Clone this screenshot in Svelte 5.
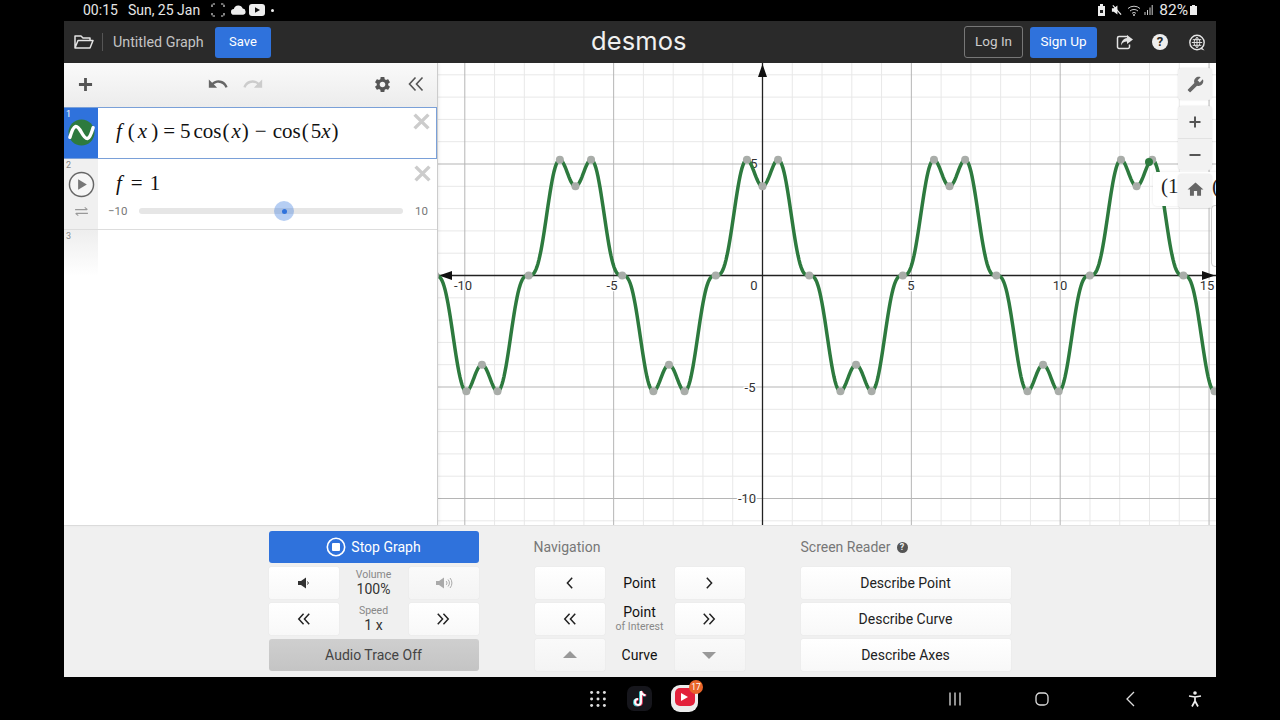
<script>
  const OX = 324.5, OY = 212.5, SX = 29.77, SY = 22.3, W = 778, H = 462;
  const px = (x) => OX + SX * x;
  const py = (y) => OY - SY * y;
  const f = (x) => 5 * Math.cos(x) - Math.cos(5 * x);
  let d = '';
  for (let s = 0; s <= W; s += 1) {
    const x = (s - OX) / SX;
    d += (s ? 'L' : 'M') + s + ' ' + py(f(x)).toFixed(2);
  }
  const vMinor = [], vMajor = [], hMinor = [], hMajor = [];
  for (let i = -10; i <= 15; i++) {
    if (i === 0) continue;
    (i % 5 === 0 ? vMajor : vMinor).push(px(i));
  }
  vMinor.push(px(-11));
  for (let i = -11; i <= 10; i++) {
    if (i === 0) continue;
    (i % 5 === 0 ? hMajor : hMinor).push(py(i));
  }
  const pts = [];
  for (let k = -20; k <= 20; k++) {
    const a = (k * Math.PI) / 2;
    if (a > -11 && a < 15.3) pts.push([px(a), py(f(a))]);
    const b = Math.PI / 6 + (k * Math.PI) / 3;
    if (b > -11 && b < 15.3 && Math.abs(Math.abs(f(b)) - 5.196) < 0.01) pts.push([px(b), py(f(b))]);
  }
  const xLabels = [['-10', 25, 227], ['-5', 174, 227], ['0', 316, 227], ['5', 473, 227], ['10', 622, 227], ['15', 769, 227]];
  const yLabels = [['5', 316, 105], ['-5', 312, 329], ['-10', 309, 440]];
</script>

<div class="screen">
  <div class="status">
    <div class="st-left">
      <span class="time">00:15</span>
      <span class="date">Sun, 25 Jan</span>
      <svg class="st-ic brackets" viewBox="0 0 14 14"><path d="M1 4V1h3M10 1h3v3M13 10v3h-3M4 13H1v-3" fill="none" stroke="#ddd" stroke-width="1.2" stroke-dasharray="2.4 1.4"/></svg>
      <svg class="st-ic cloud" viewBox="0 0 16 10"><path d="M3 10a3 3 0 0 1 0-6 5 5 0 0 1 9.500-.5A3.300 3.300 0 0 1 13 10z" fill="#eee"/></svg>
      <svg class="st-ic yt" viewBox="0 0 16 12"><rect width="16" height="12" rx="3" fill="#eee"/><path d="M6 3.300l5 2.700-5 2.700z" fill="#111"/></svg>
      <span class="dot"></span>
    </div>
    <div class="st-right">
      <svg class="st-ic bat0" viewBox="0 0 9 12"><path d="M1 2h2V0h3v2h2v10H1z" fill="#eee"/><path d="M3 6h3v3H3z" fill="#222"/></svg>
      <svg class="st-ic mute" viewBox="0 0 12 12"><path d="M1 4h2l4-3v10L3 8H1z" fill="#eee"/><path d="M2 1l9 10" stroke="#eee" stroke-width="1.300"/></svg>
      <svg class="st-ic wifi" viewBox="0 0 15 12"><path d="M1 4.500a9 9 0 0 1 12 0M3 7a6 6 0 0 1 8 0M5 9.300a3 3 0 0 1 4 0" fill="none" stroke="#ccc" stroke-width="1"/><circle cx="7" cy="11" r="1" fill="#ccc"/></svg>
      <svg class="st-ic sig" viewBox="0 0 9 12"><path d="M1 8v3M3.500 6v5M6 3.500V11M8.200 1v10" stroke="#ccc" stroke-width="1"/></svg>
      <span class="pct">82%</span>
      <svg class="st-ic bat" viewBox="0 0 7 10"><path d="M2 0h3v1h2v9H0V1h2z" fill="#eee"/></svg>
    </div>
  </div>

  <div class="app">
    <header class="top">
      <svg class="folder" viewBox="0 0 20 16"><path d="M1 14V2h6l2 2h7v2.500M1 14l3-7.500h15L16 14z" fill="none" stroke="#e4e4e4" stroke-width="1.500" stroke-linejoin="round"/></svg>
      <span class="sep"></span>
      <span class="title">Untitled Graph</span>
      <button class="blue save">Save</button>
      <span class="logo">desmos</span>
      <div class="top-right">
        <button class="login">Log In</button>
        <button class="blue signup">Sign Up</button>
        <svg class="hic share" viewBox="0 0 18 16"><path d="M12 2H3a1.500 1.500 0 0 0-1.500 1.500v9A1.500 1.500 0 0 0 3 14h9a1.500 1.500 0 0 0 1.500-1.500V10" fill="none" stroke="#e4e4e4" stroke-width="1.500"/><path d="M11 0.500l6 4.500-6 4.500V7C8 7 6 8.500 5 11c0-4 2.500-7 6-7.500z" fill="#e4e4e4"/></svg>
        <span class="help">?</span>
        <svg class="hic globe" viewBox="0 0 18 18"><circle cx="9" cy="9" r="7.600" fill="none" stroke="#e4e4e4" stroke-width="1.500"/><path d="M9 3.500v11M3.500 9h11M4.500 6h9M4.500 12h9M9 3.500c-4 3-4 8 0 11M9 3.500c4 3 4 8 0 11" fill="none" stroke="#e4e4e4" stroke-width="1"/><path d="M14 14l3 3.500-4.500-1.500z" fill="#e4e4e4"/></svg>
      </div>
    </header>

    <main class="main">
      <aside class="left">
        <div class="toolbar">
          <svg class="plus" viewBox="0 0 16 16"><path d="M8 1v14M1 8h14" stroke="#555" stroke-width="3"/></svg>
          <svg class="undo" viewBox="0 0 24 24"><path fill="#666" d="M12.500 8c-2.650 0-5.050.99-6.900 2.600L2 7v9h9l-3.620-3.620c1.390-1.160 3.160-1.880 5.120-1.880 3.540 0 6.550 2.310 7.600 5.500l2.370-.78C21.080 11.030 17.150 8 12.500 8z"/></svg>
          <svg class="redo" viewBox="0 0 24 24"><path fill="#ccc" transform="matrix(-1 0 0 1 24 0)" d="M12.500 8c-2.650 0-5.050.99-6.900 2.600L2 7v9h9l-3.620-3.620c1.390-1.160 3.160-1.880 5.120-1.880 3.540 0 6.550 2.310 7.600 5.500l2.370-.78C21.080 11.030 17.150 8 12.500 8z"/></svg>
          <svg class="gear" viewBox="0 0 24 24"><path fill="#555" d="M19.140 12.940c.04-.3.06-.61.06-.94 0-.32-.02-.64-.07-.94l2.030-1.580c.18-.14.23-.41.12-.61l-1.920-3.320c-.12-.22-.37-.29-.59-.22l-2.390.96c-.5-.38-1.030-.7-1.620-.94l-.36-2.540c-.04-.24-.24-.41-.48-.41h-3.840c-.24 0-.43.17-.47.41l-.36 2.540c-.59.24-1.130.57-1.620.94l-2.390-.96c-.22-.08-.47 0-.59.22L2.740 8.870c-.12.21-.08.47.12.61l2.030 1.580c-.05.3-.09.63-.09.94s.02.64.07.94l-2.030 1.580c-.18.14-.23.41-.12.61l1.920 3.320c.12.22.37.29.59.22l2.390-.96c.5.38 1.030.7 1.620.94l.36 2.540c.05.24.24.41.48.41h3.840c.24 0 .44-.17.47-.41l.36-2.540c.59-.24 1.130-.56 1.620-.94l2.390.96c.22.08.47 0 .59-.22l1.920-3.320c.12-.22.07-.47-.12-.61l-2.010-1.580zM12 15.600c-1.980 0-3.600-1.620-3.600-3.600s1.620-3.600 3.600-3.600 3.600 1.620 3.600 3.600-1.620 3.600-3.600 3.600z"/></svg>
          <svg class="collapse" viewBox="0 0 16 16"><path d="M7.500 1.500L1.500 8l6 6.500M14.500 1.500L8.500 8l6 6.500" fill="none" stroke="#555" stroke-width="1.600"/></svg>
        </div>

        <div class="row r1">
          <div class="tab tab-blue">
            <span class="num">1</span>
            <svg class="wave" viewBox="0 0 28 28"><circle cx="14" cy="14" r="13.500" fill="#2d7a3e"/><path d="M2 19c4-14 7-14 12-5s8 9 12-5" fill="none" stroke="#fff" stroke-width="3.500" stroke-linecap="round"/></svg>
          </div>
          <div class="math m1"><i>f</i><span class="a">(</span><i class="b">x</i><span class="c">)</span><span class="d">=</span><span class="e">5</span><span class="g">cos</span><span class="h">(</span><i class="i">x</i><span class="h">)</span><span class="j">−</span><span class="k">cos</span><span class="h">(</span><span class="i">5</span><i class="l">x</i><span class="h">)</span></div>
          <svg class="x x1" viewBox="0 0 16 16"><path d="M1.500 1.500l13 13M14.500 1.500l-13 13" stroke="#ccc" stroke-width="3.200"/></svg>
        </div>

        <div class="row r2">
          <div class="tab tab-grey">
            <span class="num">2</span>
            <svg class="play" viewBox="0 0 28 28"><circle cx="14" cy="14" r="12.500" fill="#f6f6f6" stroke="#666" stroke-width="1.500"/><path d="M10.500 8.500l9 5.500-9 5.500z" fill="#777"/></svg>
            <svg class="loop" viewBox="0 0 16 12"><path d="M1 4h13M11.500 1.500L14.500 4M15 8H2M4.500 10.500L1.500 8" fill="none" stroke="#999" stroke-width="1.200"/></svg>
          </div>
          <div class="slider-body">
            <div class="math m2"><i>f</i><span class="op2">=</span><span class="one">1</span></div>
            <div class="slider">
              <span class="lim">−10</span>
              <div class="track"><span class="handle"><span class="core"></span></span></div>
              <span class="lim r">10</span>
            </div>
          </div>
          <svg class="x x2" viewBox="0 0 16 16"><path d="M1.500 1.500l13 13M14.500 1.500l-13 13" stroke="#ccc" stroke-width="3.200"/></svg>
        </div>

        <div class="row r3">
          <div class="tab tab-fade"><span class="num">3</span></div>
        </div>
      </aside>

      <section class="graph">
        <svg class="plot" viewBox="0 0 {W} {H}" width={W} height={H}>
          {#each vMinor as x}<line x1={x} x2={x} y1="0" y2={H} class="minor" />{/each}
          {#each hMinor as y}<line x1="0" x2={W} y1={y} y2={y} class="minor" />{/each}
          {#each vMajor as x}<line x1={x} x2={x} y1="0" y2={H} class="major" />{/each}
          {#each hMajor as y}<line x1="0" x2={W} y1={y} y2={y} class="major" />{/each}
          <line x1="0" x2={W} y1={OY} y2={OY} class="axis" />
          <line x1={OX} x2={OX} y1="0" y2={H} class="axis" />
          <path d="M{OX} 1l-4.500 13h9z M1 {OY}l13-4.500v9z M{W - 1} {OY}l-13-4.500v9z" fill="#111" />
          {#each xLabels as l}<text x={l[1]} y={l[2]} class="lbl" text-anchor="middle">{l[0]}</text>{/each}
          {#each yLabels as l}<text x={l[1]} y={l[2]} class="lbl" text-anchor="middle">{l[0]}</text>{/each}
          <path {d} class="curve" />
          {#each pts as p}<circle cx={p[0]} cy={p[1]} r="4" class="poi" />{/each}
          <circle cx="711" cy="99" r="4" fill="#2d7a3e" />
        </svg>
        <div class="tooltip"><span class="t1">(1</span><span class="t2">(</span></div>
        <div class="sidebox"></div>
        <div class="tools">
          <div class="tbtn wrench">
            <svg class="tic" viewBox="0 0 24 24"><path fill="#666" transform="matrix(-1 0 0 1 24 0)" d="M22.700 19l-9.100-9.100c.9-2.300.4-5-1.500-6.900-2-2-5-2.400-7.400-1.300L9 6 6 9 1.600 4.700C.4 7.100.9 10.100 2.900 12.100c1.900 1.900 4.600 2.400 6.900 1.500l9.100 9.100c.4.4 1 .4 1.400 0l2.300-2.300c.5-.4.5-1.100.1-1.400z"/></svg>
          </div>
          <div class="tbtn zoom">
            <div class="zi"><svg class="tic2" viewBox="0 0 12 12"><path d="M6 .5v11M.5 6h11" stroke="#555" stroke-width="2"/></svg></div>
            <div class="zi"><svg class="tic2" viewBox="0 0 12 12"><path d="M.5 6h11" stroke="#555" stroke-width="2"/></svg></div>
          </div>
          <div class="tbtn homeb">
            <svg class="tic home" viewBox="0 0 24 24"><path fill="#666" d="M10 20v-6h4v6h5v-8h3L12 3 2 12h3v8z"/></svg>
          </div>
        </div>
      </section>
    </main>

    <footer class="bottom">
      <div class="col">
        <button class="blue stop">
          <svg class="stopic" viewBox="0 0 20 20"><circle cx="10" cy="10" r="8.700" fill="none" stroke="#fff" stroke-width="1.600"/><rect x="6" y="6" width="8" height="8" rx="1" fill="#fff"/></svg>
          Stop Graph
        </button>
        <div class="triple">
          <button class="w"><svg class="ic" viewBox="0 0 14 14"><path d="M1 5h3l5-3.500v11L4 9H1z" fill="#333"/><path d="M10.500 5.500a2 2 0 0 1 0 3" fill="none" stroke="#333"/></svg></button>
          <div class="mid"><small>Volume</small><span>100%</span></div>
          <button class="w off"><svg class="ic lg" viewBox="0 0 18 14"><path d="M1 5h3l5-3.500v11L4 9H1z" fill="#aaa"/><path d="M11 5a2.500 2.500 0 0 1 0 4M13 3.500a5 5 0 0 1 0 7M15 2a7.500 7.500 0 0 1 0 10" fill="none" stroke="#aaa"/></svg></button>
        </div>
        <div class="triple">
          <button class="w"><svg class="ic" viewBox="0 0 16 16"><path d="M7.500 2L2 8l5.500 6M14 2L8.500 8l5.500 6" fill="none" stroke="#222" stroke-width="1.700"/></svg></button>
          <div class="mid"><small>Speed</small><span>1 x</span></div>
          <button class="w"><svg class="ic sh" viewBox="0 0 16 16"><path d="M8.500 2L14 8l-5.500 6M2 2l5.500 6L2 14" fill="none" stroke="#222" stroke-width="1.700"/></svg></button>
        </div>
        <button class="trace">Audio Trace Off</button>
      </div>

      <div class="col">
        <div class="heading nav-h">Navigation</div>
        <div class="triple">
          <button class="w"><svg class="ic" viewBox="0 0 16 16"><path d="M10.500 2L5 8l5.500 6" fill="none" stroke="#222" stroke-width="1.700"/></svg></button>
          <div class="mid dark"><span>Point</span></div>
          <button class="w"><svg class="ic sh" viewBox="0 0 16 16"><path d="M5.500 2L11 8l-5.500 6" fill="none" stroke="#222" stroke-width="1.700"/></svg></button>
        </div>
        <div class="triple">
          <button class="w"><svg class="ic" viewBox="0 0 16 16"><path d="M7.500 2L2 8l5.500 6M14 2L8.500 8l5.500 6" fill="none" stroke="#222" stroke-width="1.700"/></svg></button>
          <div class="mid dark rev"><span>Point</span><small>of Interest</small></div>
          <button class="w"><svg class="ic sh" viewBox="0 0 16 16"><path d="M8.500 2L14 8l-5.500 6M2 2l5.500 6L2 14" fill="none" stroke="#222" stroke-width="1.700"/></svg></button>
        </div>
        <div class="triple">
          <button class="w off"><svg class="ic" viewBox="0 0 14 8"><path d="M7 0l7 7H0z" fill="#999"/></svg></button>
          <div class="mid dark"><span>Curve</span></div>
          <button class="w off"><svg class="ic sh" viewBox="0 0 14 8"><path d="M7 8L0 1h14z" fill="#999"/></svg></button>
        </div>
      </div>

      <div class="col">
        <div class="heading sr-h">Screen Reader <span class="q">?</span></div>
        <button class="w full">Describe Point</button>
        <button class="w full">Describe Curve</button>
        <button class="w full">Describe Axes</button>
      </div>
    </footer>
  </div>

  <nav class="navbar">
    <svg class="grid9" viewBox="0 0 15 15"><g fill="#ddd">
      {#each [1.500, 7.500, 13.500] as y}{#each [1.500, 7.500, 13.500] as x}<circle cx={x} cy={y} r="1.400" />{/each}{/each}
    </g></svg>
    <div class="tiktok">
      <svg class="tk" viewBox="0 0 16 18">
        <path d="M9 1v11a3 3 0 1 1-3-3M9 1c.5 2.500 2.300 4 4.500 4.300" fill="none" stroke="#3fd6e0" stroke-width="2.200" transform="translate(-.8 .4)"/>
        <path d="M9 1v11a3 3 0 1 1-3-3M9 1c.5 2.500 2.300 4 4.500 4.300" fill="none" stroke="#e8325a" stroke-width="2.200" transform="translate(.8 .2)"/>
        <path d="M9 1v11a3 3 0 1 1-3-3M9 1c.5 2.500 2.300 4 4.500 4.300" fill="none" stroke="#fff" stroke-width="1.900"/>
      </svg>
    </div>
    <div class="ytm"><span class="ytr"><span class="tri"></span></span><span class="badge">17</span></div>
    <svg class="n-recents" viewBox="0 0 14 14"><path d="M2 .5v13M7 .5v13M12 .5v13" stroke="#ddd" stroke-width="1.300"/></svg>
    <svg class="n-home" viewBox="0 0 14 14"><rect x="1" y="1" width="12" height="12" rx="4" fill="none" stroke="#ddd" stroke-width="1.300"/></svg>
    <svg class="n-back" viewBox="0 0 9 16"><path d="M8 1L1 8l7 7" fill="none" stroke="#ddd" stroke-width="1.300"/></svg>
    <svg class="n-acc" viewBox="0 0 14 16"><circle cx="7" cy="2" r="1.800" fill="#eee"/><path d="M1 5l6 1 6-1M7 6v4M7 10l-3 5.500M7 10l3 5.500" fill="none" stroke="#eee" stroke-width="1.700"/></svg>
  </nav>
</div>

<style>
  :global(body) { margin: 0; background: #000; }
  .screen { width: 1280px; height: 720px; display: flex; flex-direction: column; background: #000; overflow: hidden; font-family: Roboto, "Liberation Sans", sans-serif; }
  button { font-family: inherit; border: 0; padding: 0; }
  svg { display: block; flex: none; }

  .status { height: 21px; box-sizing: border-box; flex: none; display: flex; align-items: center; padding: 0 83px 1px 83px; color: #e6e6e6; font-size: 14px; }
  .st-left, .st-right { display: flex; align-items: center; }
  .st-right { margin-left: auto; }
  .date { margin-left: 10px; }
  .st-ic { height: 12px; }
  .brackets { width: 14px; height: 14px; margin-left: 11px; }
  .cloud { width: 15px; height: 10px; margin-left: 6px; }
  .yt { width: 16px; height: 12px; margin-left: 3px; }
  .dot { width: 3px; height: 3px; border-radius: 50%; background: #eee; margin-left: 6px; }
  .bat0 { width: 9px; margin-right: 5px; }
  .mute { width: 11px; margin-right: 5px; }
  .wifi { width: 15px; margin-right: 2px; }
  .sig { width: 9px; margin-right: 6px; }
  .pct { font-size: 15.500px; }
  .bat { width: 7px; height: 10px; margin-left: 2px; }

  .app { width: 1152px; margin: 0 64px; height: 656px; flex: none; display: flex; flex-direction: column; background: #fff; }
  .top { height: 42px; flex: none; background: #2a2a2a; display: flex; align-items: center; padding: 0 10px; color: #ccc; }
  .folder { width: 20px; height: 16px; margin-right: 8px; }
  .sep { width: 1px; height: 18px; background: #555; margin-right: 10px; }
  .title { font-size: 14.300px; color: #c4c4c4; width: 91px; white-space: nowrap; margin-right: 11px; }
  .blue { background: #2f72dc; color: #fff; border-radius: 3px; }
  .save { width: 56px; height: 31px; font-size: 13px; padding-bottom: 2px; }
  .logo { margin-left: 320px; font-family: Inter, sans-serif; font-weight: 400; font-size: 25.500px; color: #f0f0f0; letter-spacing: .1px; line-height: 1; margin-top: -3px; }
  .top-right { margin-left: auto; display: flex; align-items: center; }
  .login { width: 59px; height: 32px; background: transparent; border: 1px solid #777; border-radius: 3px; color: #ccc; font-size: 13.500px; padding-bottom: 2px; }
  .signup { width: 67px; height: 31px; font-size: 13.500px; margin-left: 7px; margin-right: 19px; padding-bottom: 2px; }
  .hic { width: 18px; height: 17px; }
  .help { width: 16px; height: 16px; border-radius: 50%; background: #eee; color: #2a2a2a; font: 700 13px/16px Roboto, sans-serif; text-align: center; margin-left: 18px; margin-right: 20px; }

  .main { height: 462px; flex: none; display: flex; }
  .left { width: 374px; flex: none; background: #fff; border-right: 1px solid #ccc; box-sizing: border-box; box-shadow: 1px 0 3px rgba(0,0,0,.08); z-index: 2; }
  .toolbar { height: 44px; box-sizing: border-box; background: linear-gradient(#fafafa, #ececec); display: flex; align-items: center; padding: 0 13px 2px 14px; }
  .plus { width: 15px; height: 15px; }
  .undo { width: 22px; height: 22px; margin-left: 114px; }
  .redo { width: 22px; height: 22px; margin-left: 13px; }
  .gear { width: 19px; height: 19px; margin-left: 109px; }
  .collapse { width: 16px; height: 16px; margin-left: 16px; }

  .row { position: relative; display: flex; box-sizing: border-box; }
  .tab { width: 34px; flex: none; position: relative; display: flex; flex-direction: column; align-items: center; }
  .num { position: absolute; left: 2px; top: 2px; font-size: 9px; color: #888; line-height: 1; }
  .r1 { height: 52px; border: 1px solid #7aa0d8; border-left: 0; }
  .tab-blue { background: #2f72dc; }
  .tab-blue .num { color: #fff; }
  .wave { width: 27px; height: 27px; margin-top: 11px; }
  .math { font-family: "Liberation Serif", "DejaVu Serif", serif; color: #111; font-size: 21px; white-space: nowrap; }
  .m1 { padding: 11px 0 0 18px; }
  .a { margin-left: 6px; }
  .b { margin-left: 3px; }
  .c { margin-left: 4px; }
  .d { margin-left: 5px; }
  .e { margin-left: 5px; }
  .g { margin-left: 3px; }
  .h { margin: 0 1px; }
  .i { margin-left: 1px; }
  .j { margin-left: 5px; }
  .k { margin-left: 6px; }
  .l { margin-left: 0; }
  .op2 { margin: 0 7px 0 9px; }
  .x { position: absolute; width: 17px; height: 17px; }
  .x1 { right: 6px; top: 5px; }
  .x2 { right: 6px; top: 6px; }
  .r2 { height: 71px; border-bottom: 1px solid #ddd; }
  .tab-grey { background: #f0f0f0; }
  .play { width: 27px; height: 27px; margin-top: 12px; }
  .loop { width: 15px; height: 11px; margin-top: 8px; }
  .slider-body { flex: 1; min-width: 0; }
  .m2 { padding: 12px 0 0 18px; }
  .slider { display: flex; align-items: center; margin: 7px 0 0 10px; height: 16px; }
  .lim { width: 20px; font-size: 11.500px; color: #777; }
  .lim.r { margin-left: 12px; width: 14px; }
  .track { width: 264px; height: 6px; margin-left: 11px; background: #e6e6e6; border-radius: 3px; position: relative; }
  .handle { position: absolute; left: 135px; top: -7px; width: 20px; height: 20px; border-radius: 50%; background: rgba(47,114,220,.35); display: flex; align-items: center; justify-content: center; }
  .core { width: 5px; height: 5px; border-radius: 50%; background: #2f72dc; }
  .r3 { height: 46px; }
  .tab-fade { height: 46px; background: linear-gradient(#eee, #fff); }

  .graph { flex: 1; position: relative; overflow: hidden; background: #fff; }
  .plot { display: block; }
  .minor { stroke: #e8e8e8; stroke-width: 1; }
  .major { stroke: #b5b5b5; stroke-width: 1; }
  .axis { stroke: #222; stroke-width: 1.300; }
  .lbl { font: 13px Roboto, sans-serif; fill: #333; paint-order: stroke; stroke: #fff; stroke-width: 2.500px; }
  .curve { fill: none; stroke: #2d7a3e; stroke-width: 3.500; }
  .poi { fill: #a9ada9; }

  .tooltip { position: absolute; left: 715px; top: 109px; width: 90px; height: 34px; background: #fff; border-radius: 4px; box-shadow: 0 0 3px rgba(0,0,0,.1); font: 21px/28px "Liberation Serif", serif; color: #222; }
  .t1 { position: absolute; left: 8px; }
  .t2 { position: absolute; left: 59px; }
  .sidebox { position: absolute; left: 773px; top: 142px; width: 20px; height: 60px; background: #fff; border: 1px solid #ccc; border-radius: 4px; }
  .tools { position: absolute; left: 740px; top: 5px; width: 34px; display: flex; flex-direction: column; }
  .tbtn { width: 34px; background: #f2f2f2; border-radius: 4px; display: flex; flex-direction: column; align-items: center; justify-content: center; box-shadow: 0 0 2px rgba(0,0,0,.12); }
  .wrench { height: 32px; }
  .zoom { height: 64px; margin-top: 6px; }
  .homeb { height: 34px; margin-top: 4px; box-sizing: border-box; padding-bottom: 3px; }
  .zi { height: 32px; width: 34px; box-sizing: border-box; display: flex; align-items: center; justify-content: center; }
  .zi + .zi { border-top: 1px solid #e2e2e2; }
  .tic { width: 17px; height: 17px; }
  .home { width: 19px; height: 19px; }
  .tic2 { width: 12px; height: 12px; }

  .bottom { height: 152px; flex: none; box-sizing: border-box; background: #f0f0f0; border-top: 1px solid #e2e2e2; padding: 5px 0 0 204.500px; display: flex; gap: 56px; }
  .col { width: 210px; flex: none; display: flex; flex-direction: column; gap: 4px; }
  .stop { height: 32px; font-size: 14px; display: flex; align-items: center; justify-content: center; gap: 5px; }
  .stopic { width: 20px; height: 20px; }
  .triple { height: 32px; display: flex; justify-content: space-between; }
  .w { width: 70px; height: 32px; background: linear-gradient(#fff, #f8f8f8); border-radius: 2px; box-shadow: 0 0 1px rgba(0,0,0,.15); display: flex; align-items: center; justify-content: center; color: #222; }
  .w.off { background: linear-gradient(#fafafa, #f4f4f4); }
  .ic { width: 14px; height: 14px; }
  .ic.sh { margin-right: 2px; }
  .ic.lg { width: 18px; height: 14px; }
  .mid { flex: 1; display: flex; flex-direction: column; align-items: center; justify-content: center; gap: 1px; font-size: 14px; color: #333; line-height: 15px; }
  .mid small { font-size: 10.500px; color: #888; line-height: 12px; }
  .mid.dark { color: #111; }
  .rev small { color: #888; }
  .trace { height: 32px; background: linear-gradient(#cfcfcf, #c4c4c4); color: #444; border-radius: 3px; font-size: 14px; }
  .heading { height: 32px; line-height: 32px; font-size: 14px; color: #777; white-space: nowrap; display: flex; align-items: center; }
  .nav-h { margin-left: -1px; }
  .sr-h { margin-left: 0; gap: 6px; }
  .q { width: 11px; height: 11px; border-radius: 50%; background: #555; color: #f0f0f0; font: 700 9px/11px Roboto, sans-serif; text-align: center; }
  .w.full { width: 210px; font-size: 14px; }

  .navbar { flex: 1; display: flex; align-items: center; padding: 0 0 0 590px; }
  .grid9 { width: 16px; height: 16px; }
  .tiktok { width: 25px; height: 25px; margin-left: 21px; border-radius: 7px; background: #16161c; display: flex; align-items: center; justify-content: center; }
  .tk { width: 16px; height: 18px; }
  .ytm { width: 27px; height: 27px; margin-left: 19px; border-radius: 9px; background: #ececec; position: relative; display: flex; justify-content: center; box-sizing: border-box; padding-top: 3px; }
  .ytr { width: 20px; height: 18px; background: #e3213b; border-radius: 5px; display: flex; align-items: center; justify-content: center; }
  .tri { width: 0; height: 0; border-left: 7px solid #fff; border-top: 4px solid transparent; border-bottom: 4px solid transparent; }
  .badge { position: absolute; right: -5px; top: -5px; width: 14px; height: 14px; border-radius: 50%; background: #e8642a; color: #fff; font-size: 8.500px; line-height: 14px; text-align: center; }
  .n-recents { width: 14px; height: 14px; margin-left: 250px; }
  .n-home { width: 14px; height: 14px; margin-left: 73px; }
  .n-back { width: 9px; height: 16px; margin-left: 77px; }
  .n-acc { width: 14px; height: 16px; margin-left: 53px; }
</style>
